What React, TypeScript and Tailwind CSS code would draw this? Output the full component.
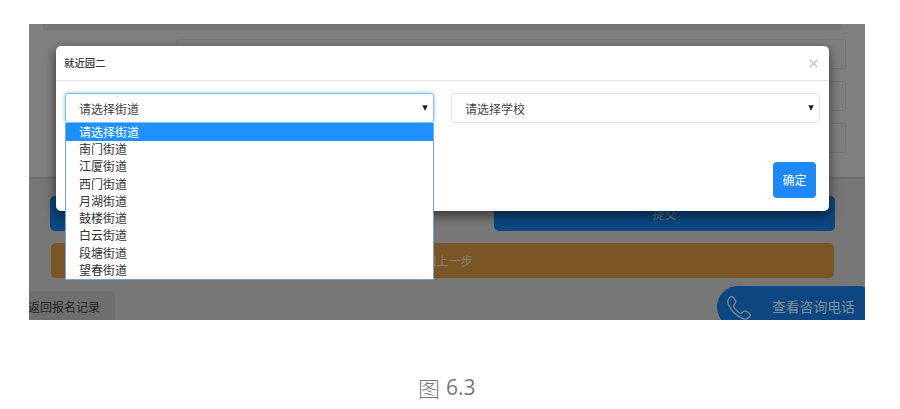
import React from 'react';

const streets = ['请选择街道', '南门街道', '江厦街道', '西门街道', '月湖街道', '鼓楼街道', '白云街道', '段塘街道', '望春街道'];

function Select({ label, focused = false }: { label: string; focused?: boolean }) {
  return (
    <div
      className={
        'flex h-[30px] w-[369px] items-center justify-between rounded-[3px] border bg-white pl-[13px] pr-[5px] pt-px text-[12px] text-[#444] ' +
        (focused ? 'border-[#80bdff] shadow-[0_0_4px_rgba(102,175,233,0.7)]' : 'border-[#e4e7ea]')
      }
    >
      <span>{label}</span>
      <svg width="6" height="6" viewBox="0 0 6 6" className="mb-px">
        <path d="M0.3 0.3H5.7L3 6Z" fill="#222" />
      </svg>
    </div>
  );
}

function PageBehind() {
  return (
    <div className="flex h-full flex-col">
      <div className="flex h-[155px] shrink-0 flex-col border-b-2 border-[#6d6d6d] bg-[#7f7f7f]">
        <div className="ml-[14px] h-[6px] w-[799px] shrink-0 rounded-b-[2px] bg-[#777]" />
        <div className="ml-[147px] mt-[9px] flex w-[670px] flex-col gap-[12px]">
          <div className="h-[30px] rounded-[2px] border border-[#757575]" />
          <div className="h-[30px] rounded-[2px] border border-[#757575]" />
          <div className="h-[30px] rounded-[2px] border border-[#757575]" />
        </div>
      </div>
      <div className="ml-[21px] mt-[17px] flex h-[35px] w-[785px] shrink-0 justify-between text-[12px] text-[#6c7883]">
        <div className="flex w-[341px] items-center justify-center rounded-[5px] bg-[#0c4781]">保存</div>
        <div className="flex w-[341px] items-center justify-center rounded-[5px] bg-[#0c4781]">提交</div>
      </div>
      <div className="ml-[22px] mt-[12px] flex h-[35px] w-[783px] shrink-0 items-center justify-center rounded-[5px] bg-[#7a5627] text-[12px] text-[#8d806e]">
        返回上一步
      </div>
      <div className="flex min-h-0 flex-1 items-start justify-between overflow-hidden">
        <div className="mt-[13px] flex h-[32px] w-[86px] items-center rounded-tr-[4px] bg-[#6f6f6f] text-[12px] text-[#222]">
          <span className="-ml-px whitespace-nowrap">返回报名记录</span>
        </div>
        <div className="-mr-[14px] mt-[8px] flex h-[42px] w-[162px] shrink-0 items-center rounded-full bg-[#0c4781] pl-[9px] text-[13.8px] text-[#84909b]">
          <svg width="26" height="26" viewBox="0 0 26 26" fill="none" stroke="#7c8994" strokeWidth="1.3" strokeLinejoin="round" className="mt-[2px]">
            <path d="M3.2 3.1C4.5 1.5 6.2 1.1 7.5 2.5L9.4 5.4C10.4 7.1 9.8 8.3 8.1 9.8C7.2 10.7 7.5 12 8.9 13.6L12.2 17C13.7 18.3 15.2 18.6 16.1 17.7C17.5 16.1 18.8 15.4 20.5 16.4L23.1 18.2C24.9 19.5 24.6 21 23 22.3C21.2 24.2 18.5 24.5 15.8 23.2C10.5 20.6 5.2 15.4 2.6 9.9C1.4 7.4 1.6 4.9 3.2 3.1Z" />
          </svg>
          <span className="-mt-px ml-[20px] whitespace-nowrap">查看咨询电话</span>
        </div>
      </div>
    </div>
  );
}

function Modal() {
  return (
    <div className="absolute left-[27px] top-[22px] h-[165px] w-[773px] rounded-[5px] bg-white shadow-[0_4px_12px_rgba(0,0,0,0.6)]">
      <div className="flex h-[35px] items-center justify-between border-b border-[#e5e5e5] pl-[8px] pr-[11px]">
        <h2 className="pb-px text-[10.4px] font-medium text-[#333]">就近园二</h2>
        <svg width="9" height="9" viewBox="0 0 9 9" className="mt-px" stroke="#c4c4c4" strokeWidth="1.6">
          <path d="M0.7 0.7L8.3 8.3M8.3 0.7L0.7 8.3" />
        </svg>
      </div>
      <div className="flex justify-between px-[9px] pt-[12px]">
        <div className="relative">
          <Select label="请选择街道" focused />
          <ul className="absolute left-0 top-[30px] z-10 w-[369px] border border-t-0 border-[#7f9fd8] bg-white text-[12px] text-[#333]">
            {streets.map((name, i) => (
              <li
                key={name}
                className={'pl-[13px] ' + (i === 0 ? 'h-[18px] bg-[#1e90ff] leading-[17px] text-white' : 'h-[17.25px] leading-[16px]')}
              >
                {name}
              </li>
            ))}
          </ul>
        </div>
        <Select label="请选择学校" />
      </div>
      <div className="flex justify-end pr-[13px] pt-[39px]">
        <button className="h-[36px] w-[43px] rounded-[4px] bg-[#1e88f7] text-[12px] text-white">确定</button>
      </div>
    </div>
  );
}

export default function App() {
  return (
    <div className="flex h-[409px] w-[900px] flex-col overflow-hidden bg-white font-['Noto_Sans_CJK_SC',sans-serif]">
      <div className="relative ml-[29px] mt-[24px] h-[296px] w-[836px] shrink-0 overflow-hidden bg-[#777]">
        <PageBehind />
        <Modal />
      </div>
      <p className="ml-[418px] mt-[52px] flex gap-[6px] text-[22px] leading-[30px] text-[#777]">
        <span className="font-light">图</span>
        <span className="font-['Open_Sans','Noto_Sans',sans-serif] text-[21px]">6.3</span>
      </p>
    </div>
  );
}
